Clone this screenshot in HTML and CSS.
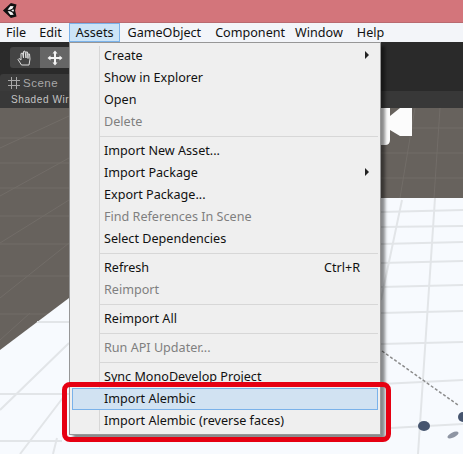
FILE: index.html
```html
<!DOCTYPE html>
<html lang="en">
<head>
    <meta charset="UTF-8">
    <meta name="viewport" content="width=device-width, initial-scale=1.0">
    <title>Assets menu</title>
    <link rel="stylesheet" href="styles.css">
</head>
<body>
    <div class="window">
        <div class="titlebar">
            <svg class="logo" viewBox="0 0 16 16" width="15" height="15">
                <path d="M9.500 0 15.500 1.500 14 8 15.500 14.500 9.500 16 1 8Z" fill="#111"/>
                <path d="M9 3.200 12.500 3.500 11 6 8.500 7.300H6ZM6 8.700H8.500L11 10 12.500 12.500 9 12.800ZM9.800 8 12 6.700 12.800 8 12 9.300Z" fill="#f5f5f5"/>
            </svg>
        </div>
        <nav class="menubar">
            <span class="menubar-item">File</span>
            <span class="menubar-item edit">Edit</span>
            <span class="menubar-item active">Assets</span>
            <span class="menubar-item">GameObject</span>
            <span class="menubar-item">Component</span>
            <span class="menubar-item window-item">Window</span>
            <span class="menubar-item">Help</span>
        </nav>
        <div class="toolbar">
            <div class="tool-group">
                <span class="tool">
                    <svg viewBox="0 0 18 18" width="18" height="18"><path d="M5.500 16 2 10.500 3 9.500 5 11V4.500L6.500 4 7.500 9V2.500L9 2 10 9V3L11.500 3 12 9.500V5L13.500 5 14 10 13 16Z" fill="none" stroke="#ddd" stroke-linejoin="round"/></svg>
                </span>
                <span class="tool selected">
                    <svg viewBox="0 0 16 16" width="16" height="16"><path d="M8 .5 10.500 3.500H9V7h3.500V5.500l3 2.500-3 2.500V9H9v3.500h1.500L8 15.500l-2.500-3H7V9H3.500v1.500L.5 8l3-2.500V7H7V3.500H5.500Z" fill="#f4f4f4"/></svg>
                </span>
            </div>
        </div>
        <div class="tabbar">
            <span class="scene-tab">
                <svg class="hash" viewBox="0 0 12 12" width="12" height="12"><path d="M3.500 0V12M8.500 0V12M0 3.500H12M0 8.500H12" stroke="#a8a8a8" fill="none"/></svg>
                Scene
            </span>
        </div>
        <div class="scene-options">Shaded Wire</div>
        <div class="viewport">
            <svg class="ground" viewBox="0 0 463 346" width="463" height="346">
                <g stroke="#726d68" fill="none">
                    <path d="M0 30H69M0 55H69M0 80H69M0 108H69M0 136H69M0 168H69M0 206H69"/>
                    <path d="M0 40 69 8M0 88 69 50M0 135 69 92M0 190 69 135M0 232 30 205M381 20H463M381 45H463M381 70H463"/>
                    <path d="M415 0 400 90M440 0 434 90"/>
                </g>
                <path d="M0 242 69 190 202 90H463V346H0Z" fill="#f7fafe"/>
                <g stroke="#e2e5e8" stroke-width="2" fill="none">
                    <path d="M37 214H69M0 286H69M0 333H62"/>
                    <path d="M381 104 463 102M381 119 463 118M381 136 463 134M381 155 463 153M381 179 463 177M381 205 463 203M381 236 463 234M381 276 463 272M391 320 463 316"/>
                    <path d="M402 92 381 192M435 90 418 346M69 235 0 302M65 287 20 346M57 330 53 346"/>
                </g>
                <path d="M382 243 458 297" stroke="#8c8c8c" stroke-width="1.500" stroke-dasharray="3 2" fill="none"/>
                <ellipse cx="424" cy="318" rx="6" ry="5" fill="#46556f"/>
                <ellipse cx="463" cy="309" rx="5" ry="5" fill="#46556f"/>
                <ellipse cx="453" cy="327" rx="6" ry="2.500" fill="#8e95a3" transform="rotate(-25 453 327)"/>
                <path d="M381 0H390V8L400 0H412V28H400L390 22V32Q390 37 385 37H381Z" fill="#fcfcfc"/>
            </svg>
        </div>

        <ul class="menu">
            <li class="menu-item sub">Create</li>
            <li class="menu-item">Show in Explorer</li>
            <li class="menu-item">Open</li>
            <li class="menu-item off">Delete</li>
            <li class="menu-sep"></li>
            <li class="menu-item">Import New Asset...</li>
            <li class="menu-item sub">Import Package</li>
            <li class="menu-item">Export Package...</li>
            <li class="menu-item off">Find References In Scene</li>
            <li class="menu-item">Select Dependencies</li>
            <li class="menu-sep"></li>
            <li class="menu-item">Refresh<span class="shortcut">Ctrl+R</span></li>
            <li class="menu-item off">Reimport</li>
            <li class="menu-sep"></li>
            <li class="menu-item">Reimport All</li>
            <li class="menu-sep"></li>
            <li class="menu-item off">Run API Updater...</li>
            <li class="menu-sep"></li>
            <li class="menu-item">Sync MonoDevelop Project</li>
            <li class="menu-item hover">Import Alembic</li>
            <li class="menu-item">Import Alembic (reverse faces)</li>
        </ul>
        <div class="callout"></div>
    </div>
</body>
</html>
```

FILE: styles.css
```css
* {
    box-sizing: border-box;
}

body {
    margin: 0;
    font-family: "Noto Sans", "Liberation Sans", sans-serif;
    font-size: 12.6px;
    color: #111;
}

.window {
    position: relative;
    width: 463px;
    height: 454px;
    overflow: hidden;
    background-color: #2a2a2a;
}

.titlebar {
    height: 23px;
    padding: 3px 0 0 2px;
    background-color: #d3757b;
    border-bottom: 1px solid #b96a70;
}

.logo {
    display: block;
}

.menubar {
    display: flex;
    height: 19px;
    background-color: #f3f5f9;
    line-height: 19px;
}

.menubar-item {
    padding: 0 6px;
    border: 1px solid transparent;
    border-width: 0 1px;
}

.menubar-item:first-child {
    padding-left: 5px;
}

.menubar-item.edit {
    margin-left: -1px;
}

.menubar-item.window-item {
    margin-left: -4px;
}

.menubar-item.active {
    background-color: #cce4f7;
    border: 1px solid #7ab2ea;
    line-height: 17px;
}

.toolbar {
    height: 32px;
    padding: 5px 0 0 10px;
    background-color: #2a2a2a;
}

.tool-group {
    display: flex;
    width: 60px;
    height: 21px;
}

.tool {
    flex: 1;
    display: flex;
    align-items: center;
    justify-content: center;
    background-color: #444;
    border-radius: 3px 0 0 3px;
}

.tool.selected {
    background-color: #666;
    border-radius: 0;
}

.tabbar {
    display: flex;
    height: 17px;
    background-color: #2a2a2a;
}

.scene-tab {
    display: flex;
    align-items: center;
    width: 72px;
    height: 17px;
    padding-left: 8px;
    background-color: #3b3b3b;
    border-radius: 3px 3px 0 0;
    color: #a8a8a8;
    letter-spacing: 0.5px;
    font-family: "Liberation Sans", sans-serif;
    font-size: 11.500px;
}

.hash {
    margin-right: 3px;
}

.scene-options {
    height: 17px;
    background-color: #383838;
    color: #c4c4c4;
    font-family: "Liberation Sans", sans-serif;
    font-size: 10px;
    letter-spacing: 0.6px;
    line-height: 17px;
    padding-left: 11px;
    white-space: nowrap;
}

.viewport {
    height: 346px;
    background-color: #67625d;
}

.ground {
    display: block;
}

.menu {
    position: absolute;
    left: 69px;
    top: 42px;
    width: 312px;
    margin: 0;
    padding: 2px;
    list-style: none;
    background-color: #efefef;
    border: 1px solid #979797;
    box-shadow: 4px 4px 3px rgba(0, 0, 0, 0.45);
    background-image: linear-gradient(#d7d7d7, #d7d7d7);
    background-size: 1px calc(100% - 6px);
    background-position: 29px 3px;
    background-repeat: no-repeat;
}

.menu-item {
    position: relative;
    display: flex;
    justify-content: space-between;
    height: 22px;
    padding: 0 8px 0 31px;
    line-height: 19px;
    border: 1px solid transparent;
}

.menu-item.off {
    color: #7f7f7f;
}

.menu-item.hover {
    background-color: #d1e2f2;
    border-color: #7ab2ea;
}

.menu-item.sub::after {
    content: "";
    position: absolute;
    right: 8px;
    top: 5px;
    border-left: 4px solid #222;
    border-top: 4px solid transparent;
    border-bottom: 4px solid transparent;
}

.shortcut {
    margin-right: 9px;
}

.menu-sep {
    height: 7px;
    padding-top: 3px;
    margin-left: 28px;
}

.menu-sep::before {
    content: "";
    display: block;
    height: 1px;
    background-color: #d7d7d7;
}

.callout {
    position: absolute;
    left: 62px;
    top: 382px;
    width: 329px;
    height: 60px;
    border: 5px solid #e60012;
    border-radius: 8px;
}
```
